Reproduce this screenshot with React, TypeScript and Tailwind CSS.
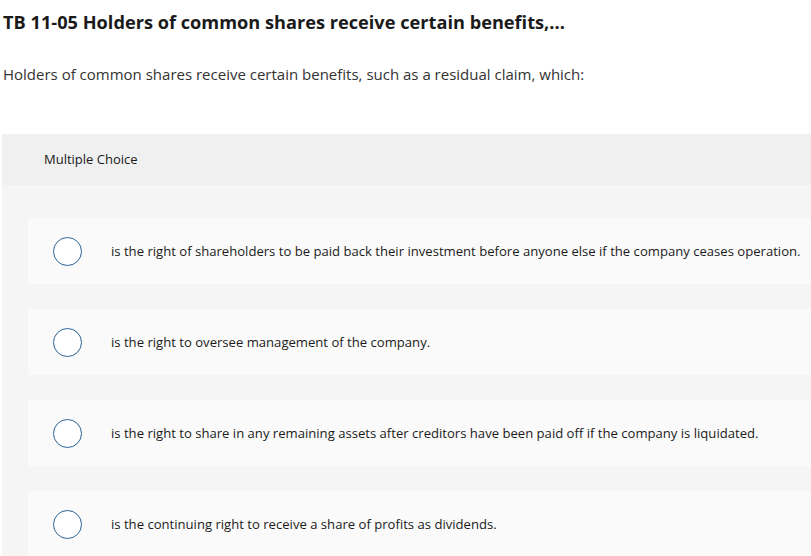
import React from "react";

const options = [
  "is the right of shareholders to be paid back their investment before anyone else if the company ceases operation.",
  "is the right to oversee management of the company.",
  "is the right to share in any remaining assets after creditors have been paid off if the company is liquidated.",
  "is the continuing right to receive a share of profits as dividends.",
];

export default function App() {
  return (
    <div
      className="w-[811px] h-[556px] overflow-hidden bg-white text-[#222]"
      style={{ fontFamily: "'Open Sans', Lato, sans-serif" }}
    >
      <h1 className="pl-[3px] pt-[10px] text-[18.2px] font-bold leading-[24px] text-[#1a1a1a] whitespace-nowrap">
        TB 11-05 Holders of common shares receive certain benefits,...
      </h1>
      <p className="pl-[3px] mt-[29px] text-[15px] leading-[22px] text-[#333] whitespace-nowrap">
        Holders of common shares receive certain benefits, such as a residual claim, which:
      </p>
      <div className="ml-[2px] mt-[49px] w-[830px]">
        <div className="h-[51px] bg-[#f0f0f0] flex items-center pl-[42px] text-[13px] text-[#1a1a1a]">
          Multiple Choice
        </div>
        <div className="bg-[#f5f5f5] pt-[33px] pl-[26px] flex flex-col gap-[25px] pb-[40px]">
          {options.map((o, i) => (
            <div key={i} className="h-[66px] bg-[#fafafa] flex items-center">
              <div className="ml-[25px] w-[29px] h-[29px] rounded-full border-[1.5px] border-[#2b6194] bg-white shrink-0" />
              <div className="ml-[29px] pt-[1px] text-[13.1px] text-[#1a1a1a] whitespace-nowrap">{o}</div>
            </div>
          ))}
        </div>
      </div>
    </div>
  );
}
